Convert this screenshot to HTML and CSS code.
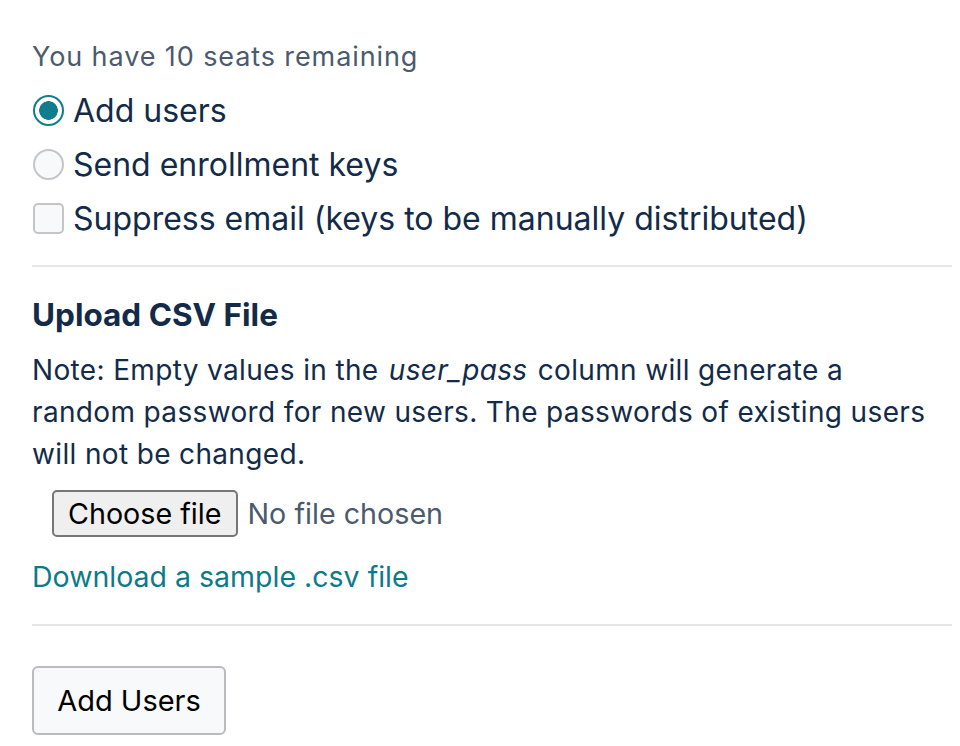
FILE: index.html
```html
<!DOCTYPE html>
<html>
<head>
<meta charset="utf-8">
<link rel="stylesheet" href="styles.css">
</head>
<body>
<div class="page">
  <p class="seats">You have 10 seats remaining</p>
  <label class="opt"><input type="radio" name="mode" class="radio" checked><span>Add users</span></label>
  <label class="opt"><input type="radio" name="mode" class="radio"><span>Send enrollment keys</span></label>
  <label class="opt"><input type="checkbox" class="check"><span>Suppress email (keys to be manually distributed)</span></label>
  <hr class="divider first">
  <h3 class="heading">Upload CSV File</h3>
  <p class="note">Note: Empty values in the <em>user_pass</em> column will generate a random password for new users. The passwords of existing users will not be changed.</p>
  <div class="file-row">
    <button class="file-btn" type="button">Choose file</button>
    <span class="file-status">No file chosen</span>
  </div>
  <a class="sample" href="#">Download a sample .csv file</a>
  <hr class="divider second">
  <button class="submit" type="button">Add Users</button>
</div>
</body>
</html>
```
FILE: styles.css
```css
* { box-sizing: border-box; }
html, body { margin: 0; padding: 0; background: #fff; }
body {
  font-family: Inter, "Liberation Sans", Arial, sans-serif;
  font-size: 28px;
  color: #132b48;
}
.page {
  width: 920px;
  margin-left: 32px;
  padding-top: 36px;
}
.seats {
  margin: 0 0 5px;
  font-size: 27px;
  letter-spacing: 0.9px;
  line-height: 42px;
  color: #4b5a6d;
}
.opt {
  display: flex;
  align-items: center;
  height: 54px;
  gap: 9px;
  font-size: 32px;
}
.radio, .check {
  appearance: none;
  -webkit-appearance: none;
  margin: 0 0 0 1px;
  width: 31px;
  height: 31px;
  flex: none;
  border: 2px solid #c3c5c9;
  background: #f8f9fb;
}
.radio { border-radius: 50%; }
.radio:checked {
  border-color: #0f7d8e;
  background: radial-gradient(circle, #0f7d8e 0 9px, #fff 9.6px);
}
.check { border-radius: 5px; }
.divider {
  border: 0;
  height: 2px;
  background: #e6e6e6;
  margin: 0;
}
.divider.first { margin-top: 20px; }
.heading {
  margin: 27px 0 13px;
  font-size: 31.5px;
  line-height: 42px;
  font-weight: 700;
}
.note {
  margin: 0;
  font-size: 28px;
  letter-spacing: 0.35px;
  line-height: 42px;
}
.note em { padding: 0 2px; }
.file-row {
  display: flex;
  align-items: center;
  gap: 10px;
  margin: 15px 0 0 20px;
}
.file-btn {
  font: inherit;
  font-size: 28.7px;
  color: #000;
  background: #efefef;
  border: 2px solid #767676;
  border-radius: 5px;
  height: 47px;
  padding: 0 14px;
}
.file-status { color: #4b5a6d; font-size: 28.7px; }
.sample {
  display: block;
  margin-top: 19px;
  font-size: 28.5px;
  line-height: 42px;
  color: #0d7a8c;
  text-decoration: none;
}
.divider.second { margin-top: 26px; }
.submit {
  display: block;
  margin-top: 40px;
  font: inherit;
  font-size: 29px;
  color: #000;
  width: 194px;
  height: 69px;
  background: #f8f9fa;
  border: 2px solid #b9bbbe;
  border-radius: 6px;
}
```
